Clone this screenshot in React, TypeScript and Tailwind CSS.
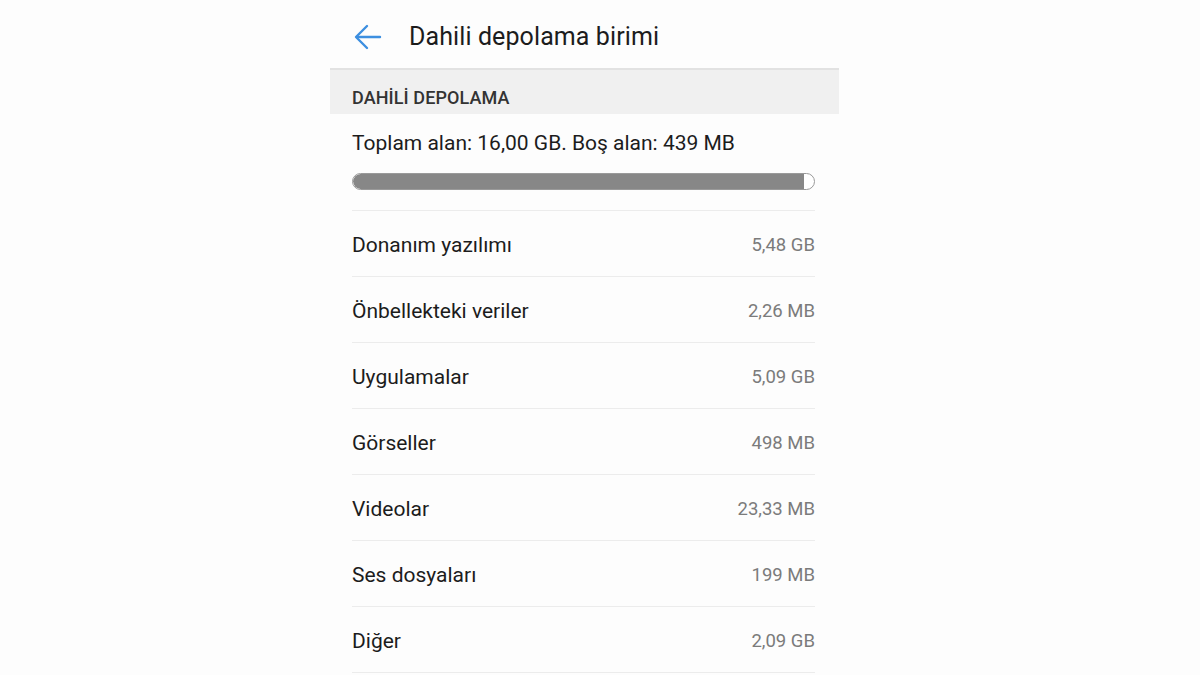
import React from "react";

interface StorageItem {
  label: string;
  size: string;
}

const items: StorageItem[] = [
  { label: "Donanım yazılımı", size: "5,48 GB" },
  { label: "Önbellekteki veriler", size: "2,26 MB" },
  { label: "Uygulamalar", size: "5,09 GB" },
  { label: "Görseller", size: "498 MB" },
  { label: "Videolar", size: "23,33 MB" },
  { label: "Ses dosyaları", size: "199 MB" },
  { label: "Diğer", size: "2,09 GB" },
];

export default function App() {
  return (
    <div
      className="w-[1200px] h-[675px] overflow-hidden bg-[#fdfdfd] pl-[330px]"
      style={{ fontFamily: "Roboto, 'Noto Sans', sans-serif" }}
    >
      <div className="w-[509px] flex flex-col">
        {/* Header */}
        <div className="h-[70px] flex items-center pt-[6px] pl-[24px] border-b-2 border-[#e2e2e2]">
          <svg width="28" height="26" viewBox="0 0 28 26" fill="none" stroke="#3d8fe0" strokeWidth="2.4" strokeLinecap="round" strokeLinejoin="round">
            <line x1="26" y1="13" x2="3" y2="13" />
            <polyline points="13,2 2,13 13,24" />
          </svg>
          <h1 className="ml-[27px] text-[25px] text-[#1c1c1c] tracking-[0.1px]">Dahili depolama birimi</h1>
        </div>

        {/* Section header */}
        <div className="h-[44px] bg-[#f0f0f0] pt-[17px] pl-[22px]">
          <div className="text-[18px] leading-[22px] font-medium text-[#333] tracking-[0.1px]">DAHİLİ DEPOLAMA</div>
        </div>

        <div className="pl-[22px] pr-[24px]">
          <div className="pt-[16px] text-[21px] text-[#1c1c1c] leading-[26px]">
            Toplam alan: 16,00 GB. Boş alan: 439 MB
          </div>
          <div className="mt-[17px] h-[17px] rounded-full border border-[#9a9a9a] bg-white overflow-hidden">
            <div className="h-full bg-[#878787] rounded-l-full" style={{ width: "97.8%" }} />
          </div>
          <div className="mt-[20px] border-t border-[#ececec]" />

          {items.map((item) => (
            <div key={item.label} className="h-[66px] pt-[4px] flex items-center justify-between border-b border-[#ececec]">
              <span className="text-[21px] text-[#1c1c1c]">{item.label}</span>
              <span className="text-[18.5px] text-[#7b7b7b]">{item.size}</span>
            </div>
          ))}
        </div>
      </div>
    </div>
  );
}
